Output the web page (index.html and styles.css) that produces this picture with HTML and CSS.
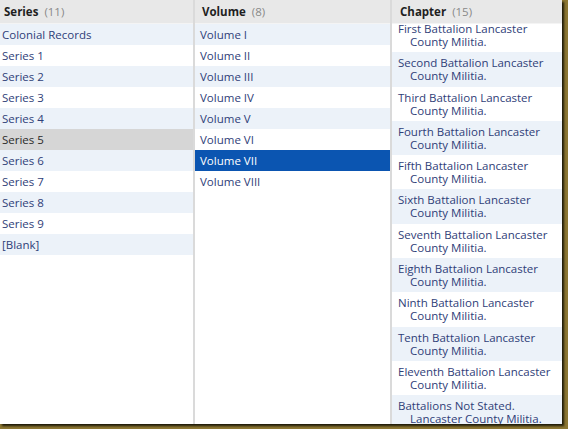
FILE: index.html
```html
<!DOCTYPE html>
<html>
<head>
<meta charset="utf-8">
<link rel="stylesheet" href="styles.css">
</head>
<body>
<div class="frame">
  <div class="browser">
    <div class="col col-series">
      <div class="head"><span class="title">Series</span> <span class="count">(11)</span></div>
      <div class="list">
        <div class="row alt">Colonial Records</div>
        <div class="row">Series 1</div>
        <div class="row alt">Series 2</div>
        <div class="row">Series 3</div>
        <div class="row alt">Series 4</div>
        <div class="row current">Series 5</div>
        <div class="row alt">Series 6</div>
        <div class="row">Series 7</div>
        <div class="row alt">Series 8</div>
        <div class="row">Series 9</div>
        <div class="row alt">[Blank]</div>
      </div>
    </div>
    <div class="col col-volume">
      <div class="head"><span class="title">Volume</span> <span class="count">(8)</span></div>
      <div class="list">
        <div class="row alt">Volume I</div>
        <div class="row">Volume II</div>
        <div class="row alt">Volume III</div>
        <div class="row">Volume IV</div>
        <div class="row alt">Volume V</div>
        <div class="row">Volume VI</div>
        <div class="row selected">Volume VII</div>
        <div class="row">Volume VIII</div>
      </div>
    </div>
    <div class="col col-chapter">
      <div class="head"><span class="title">Chapter</span> <span class="count">(15)</span></div>
      <div class="list scroll">
        <div class="inner">
          <div class="item">First Battalion Lancaster County Militia.</div>
          <div class="item alt">Second Battalion Lancaster County Militia.</div>
          <div class="item">Third Battalion Lancaster County Militia.</div>
          <div class="item alt">Fourth Battalion Lancaster County Militia.</div>
          <div class="item">Fifth Battalion Lancaster County Militia.</div>
          <div class="item alt">Sixth Battalion Lancaster County Militia.</div>
          <div class="item">Seventh Battalion Lancaster County Militia.</div>
          <div class="item alt">Eighth Battalion Lancaster County Militia.</div>
          <div class="item">Ninth Battalion Lancaster County Militia.</div>
          <div class="item alt">Tenth Battalion Lancaster County Militia.</div>
          <div class="item">Eleventh Battalion Lancaster County Militia.</div>
          <div class="item alt">Battalions Not Stated. Lancaster County Militia.</div>
        </div>
      </div>
    </div>
  </div>
</div>
</body>
</html>
```
FILE: styles.css
```css
html, body {
  margin: 0;
  padding: 0;
}
body {
  width: 568px;
  height: 429px;
  background: #8c7733;
  overflow: hidden;
  font-family: "Open Sans", "DejaVu Sans", sans-serif;
  font-size: 11.5px;
}
.frame {
  width: 562px;
  height: 424px;
  box-shadow: 2px 2px 2px #1e1a08;
  background: #fff;
  overflow: hidden;
}
.browser {
  display: grid;
  grid-template-columns: 195px 197px 170px;
  height: 424px;
}
.col {
  display: flex;
  flex-direction: column;
  overflow: hidden;
  min-height: 0;
}
.col-series, .col-volume {
  border-right: 2px solid #dadada;
}
.head {
  height: 23px;
  line-height: 23px;
  background: #e8e8e8;
  flex: none;
  color: #222;
  white-space: nowrap;
}
.col-series .head { padding-left: 4px; }
.col-volume .head { padding-left: 7px; }
.col-chapter .head { padding-left: 8px; }
.title {
  font-weight: bold;
  color: #1f1f1f;
}
.count {
  color: #888;
  margin-left: 3px;
}
.list {
  flex: 1;
  min-height: 0;
  border-top: 1px solid #f4f4f4;
}
.row {
  height: 21px;
  line-height: 21px;
  color: #2f4078;
  white-space: nowrap;
}
.col-series .row { padding-left: 2px; }
.col-volume .row { padding-left: 5px; }
.row.alt { background: #ecf2f9; }
.row.current { background: #d6d6d6; color: #2a2a2a; }
.row.selected { background: #0b55b1; color: #ffffff; }
.scroll { overflow: hidden; }
.inner { margin-top: -6px; }
.item {
  height: 34.3px;
  box-sizing: border-box;
  padding: 4px 2px 0 18px;
  text-indent: -12px;
  line-height: 13px;
  color: #2f4078;
}
.item.alt { background: #ecf2f9; }
```
